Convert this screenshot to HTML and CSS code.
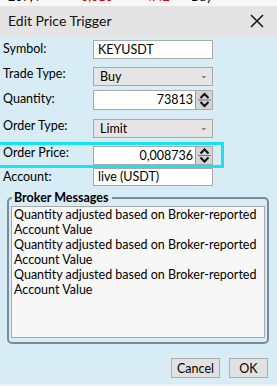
FILE: index.html
```html
<!DOCTYPE html>
<html lang="en">
<head>
    <meta charset="UTF-8">
    <title>Edit Price Trigger</title>
    <link rel="stylesheet" href="styles.css">
</head>
<body>
    <div class="back-row">
        <span class="c1">207,4</span>
        <span class="c2 red">0,010</span>
        <span class="c3 red">4.42</span>
        <span class="c4">Buy</span>
    </div>

    <div class="dialog">
        <div class="titlebar">
            <span class="title">Edit Price Trigger</span>
            <svg class="close" width="14" height="14" viewBox="0 0 14 14">
                <path d="M1 1 L13 13 M13 1 L1 13" stroke="#1a1a1a" stroke-width="1.6" fill="none"/>
            </svg>
        </div>

        <div class="content">
            <div class="row r-symbol">
                <label>Symbol:</label>
                <div class="field text">KEYUSDT</div>
            </div>
            <div class="row r-trade">
                <label>Trade Type:</label>
                <div class="field select">Buy <span class="chev">&#8964;</span></div>
            </div>
            <div class="row r-qty">
                <label>Quantity:</label>
                <div class="field num">
                    <span class="val">73813</span>
                    <span class="spin">
                        <svg width="15" height="18" viewBox="0 0 15 18">
                            <path d="M3.5 7 L7.5 3 L11.5 7" stroke="#111" stroke-width="2" fill="none"/>
                            <path d="M1 9 H14" stroke="#777" stroke-width="1"/>
                            <path d="M3.5 11 L7.5 15 L11.5 11" stroke="#111" stroke-width="2" fill="none"/>
                        </svg>
                    </span>
                </div>
            </div>
            <div class="row r-otype">
                <label>Order Type:</label>
                <div class="field select">Limit <span class="chev">&#8964;</span></div>
            </div>
            <div class="row r-price highlight">
                <label>Order Price:</label>
                <div class="field num">
                    <span class="val">0,008736</span>
                    <span class="spin">
                        <svg width="15" height="17" viewBox="0 0 15 17">
                            <path d="M3.5 6.5 L7.5 2.5 L11.5 6.5" stroke="#111" stroke-width="2" fill="none"/>
                            <path d="M1 8.5 H14" stroke="#777" stroke-width="1"/>
                            <path d="M3.5 10.5 L7.5 14.5 L11.5 10.5" stroke="#111" stroke-width="2" fill="none"/>
                        </svg>
                    </span>
                </div>
            </div>
            <div class="row r-account">
                <label>Account:</label>
                <div class="field text">live (USDT)</div>
            </div>

            <fieldset class="group">
                <legend>Broker Messages</legend>
                <div class="messages">
                    <p>Quantity adjusted based on Broker-reported Account Value</p>
                    <p>Quantity adjusted based on Broker-reported Account Value</p>
                    <p>Quantity adjusted based on Broker-reported Account Value</p>
                </div>
            </fieldset>

            <div class="buttons">
                <button class="btn cancel">Cancel</button>
                <button class="btn ok">OK</button>
            </div>
        </div>
    </div>
</body>
</html>
```

FILE: styles.css
```css
* {
    margin: 0;
    padding: 0;
    box-sizing: border-box;
}

body {
    width: 277px;
    height: 386px;
    overflow: hidden;
    background: #f0f0f0;
    font-family: Lato, "Noto Sans", sans-serif;
    font-size: 12.5px;
    color: #000;
}

.back-row {
    height: 6px;
    overflow: hidden;
    position: relative;
    background: #f7f7f7;
}

.back-row span {
    position: absolute;
    top: -11px;
    line-height: 16px;
}

.back-row .c1 { left: 8px; }
.back-row .c2 { left: 81px; }
.back-row .c3 { left: 145px; }
.back-row .c4 { left: 191px; }
.red { color: #e00000; }

.titlebar {
    height: 31px;
    background: #e4e4e4;
    display: flex;
    align-items: center;
    justify-content: space-between;
    padding: 0 13px 2px 8px;
}

.title {
    font-size: 14px;
    color: #111;
}

.content {
    background: #d7ecf5;
    height: 347px;
    padding-top: 3px;
}

.row {
    display: flex;
    align-items: flex-start;
    height: 25px;
}

.row label {
    width: 93px;
    padding-left: 3px;
    line-height: 16px;
    padding-top: 1px;
}

.field {
    width: 120px;
    height: 19px;
    border: 1px solid #a9a9a9;
    background: #fff;
    padding: 0 4px;
    line-height: 17px;
}

.field.select {
    background: #e5e5e5;
    display: flex;
    justify-content: space-between;
    padding-left: 6px;
    line-height: 18px;
    margin-top: 2px;
}

.chev {
    font-size: 9px;
    color: #333;
    line-height: 14px;
}

.field.num {
    display: flex;
    justify-content: flex-end;
    padding: 0;
    height: 20px;
}

.field.num .val {
    padding-right: 2px;
    line-height: 18px;
}

.spin {
    width: 17px;
    background: #d4d4d4;
    border-left: 1px solid #999;
    display: flex;
    align-items: center;
    justify-content: center;
}

.r-qty { height: 27px; }

.highlight {
    width: 224px;
    height: 26px;
    border: 3px solid #16e4f5;
    border-left: none;
    align-items: center;
}

.highlight label {
    padding-top: 0;
    margin-top: -4px;
}

.r-price .field {
    height: 19px;
}

.r-account {
    height: 22px;
}

.r-account .field {
    height: 18px;
    line-height: 16px;
}

.group {
    margin: 0 8px 0 7px;
    border: 2px solid #7a8a96;
    border-radius: 5px;
    padding: 0 2px 2px 2px;
    height: 154px;
}

.group legend {
    font-weight: bold;
    padding: 0 3px 0 2px;
    margin-left: 1px;
    line-height: 16px;
}

.messages {
    background: #f7f7f7;
    border: 1px solid #a9a9a9;
    height: 132px;
    padding: 0 2px;
    line-height: 15px;
}

.buttons {
    display: flex;
    justify-content: flex-end;
    gap: 9px;
    padding: 14px 9px 0 0;
}

.btn {
    height: 20px;
    border: 1px solid #adadad;
    background: #e1e1e1;
    font-family: inherit;
    font-size: 12.5px;
    color: #000;
}

.cancel { width: 49px; }
.ok { width: 39px; }
```
